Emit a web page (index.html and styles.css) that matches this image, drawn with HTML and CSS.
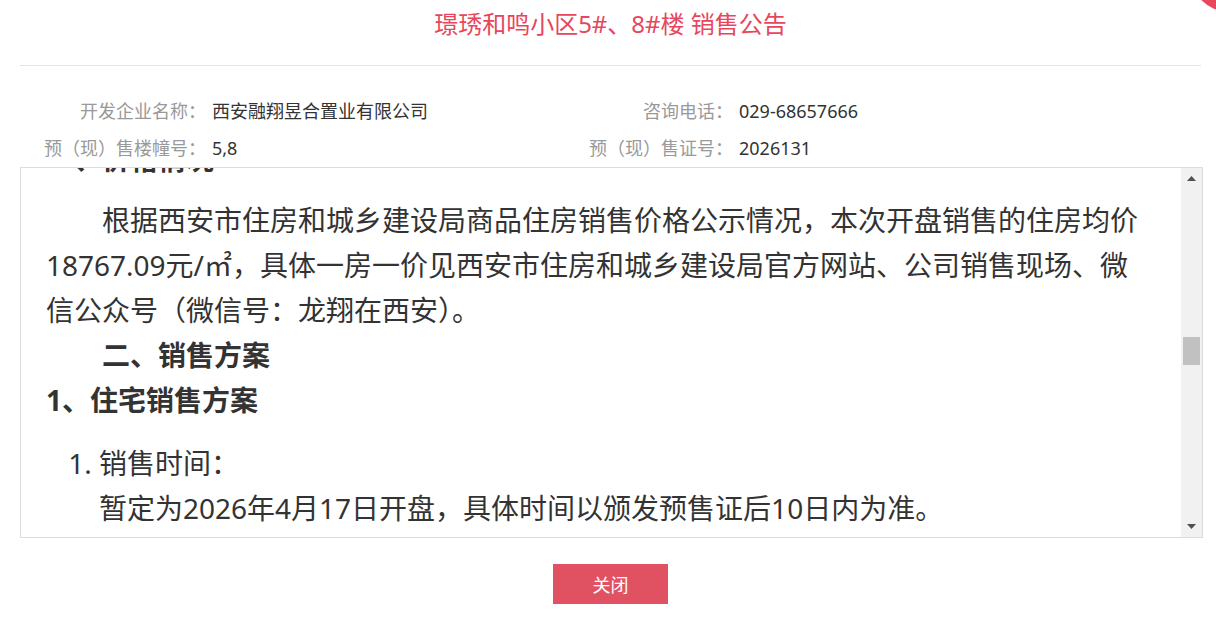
FILE: index.html
```html
<!DOCTYPE html>
<html>
<head>
	<title>璟琇和鸣小区5#、8#楼 销售公告</title>
	<meta charset="utf-8">
	<meta name="viewport" content="width=device-width, initial-scale=1">
	<link rel="stylesheet" href="styles.css">
</head>
<body>
	<span class="close-dot"></span>
	<div class="wrap">
		<div class="head">
			<h1 class="title">璟琇和鸣小区5#、8#楼 销售公告</h1>
		</div>
		<div class="info">
			<span class="label">开发企业名称：</span><span class="value">西安融翔昱合置业有限公司</span>
			<span class="label">咨询电话：</span><span class="value">029-68657666</span>
			<span class="label">预（现）售楼幢号：</span><span class="value">5,8</span>
			<span class="label">预（现）售证号：</span><span class="value">2026131</span>
		</div>
		<div class="notice">
			<div class="notice-body" id="notice">
				<h2 class="doc-title">璟琇和鸣小区5#、8#楼销售公告</h2>
				<p class="para">西安融翔昱合置业有限公司开发建设的璟琇和鸣小区项目5#、8#楼已取得西安市住房和城乡建设局核发的《商品房预售许可证》，具备对外销售条件。为保障购房群众合法权益，规范商品房销售行为，现将本次销售有关事项公告如下：</p>
				<h4 class="sec">项目基本情况</h4>
				<p>项目名称：璟琇和鸣小区</p>
				<p>开发企业：西安融翔昱合置业有限公司</p>
				<p>项目地址：西安市未央区北辰大道与凤城九路十字东北角</p>
				<p>预售许可证号：2026131</p>
				<p>本次销售楼栋：5#、8#楼</p>
				<p>房屋用途：住宅</p>
				<p>建筑结构：钢筋混凝土剪力墙结构</p>
				<p>楼栋层数：5#楼地上33层、地下2层；8#楼地上33层、地下2层</p>
				<p>本次销售套数：共计396套，其中5#楼198套，8#楼198套</p>
				<p>本次销售面积：共计46712.58㎡</p>
				<p>主力户型：建筑面积约98㎡三室两厅一卫、约118㎡三室两厅两卫、约139㎡四室两厅两卫</p>
				<p>交付标准：毛坯交付</p>
				<p>预计交房时间：2028年6月30日前</p>
				<p>物业服务企业：西安融翔物业服务有限公司</p>
				<p>物业服务费：住宅2.38元/㎡·月</p>
				<h4 class="sec">车位配套情况</h4>
				<p class="para">本项目规划机动车停车位共计1286个，其中地下机动车停车位1198个，地上机动车停车位88个，车位销售方案另行公示。</p>
				<h4 class="sec">周边配套情况</h4>
				<p class="para">项目周边规划有幼儿园、小学、社区卫生服务站及商业配套设施，相关配套以政府最终规划及建设情况为准，不作为本公司对购房人的承诺。</p>
				<h4 class="sec-flat" id="price">一、价格情况</h4>
				<p class="para">根据西安市住房和城乡建设局商品住房销售价格公示情况，本次开盘销售的住房均价18767.09元/㎡，具体一房一价见西安市住房和城乡建设局官方网站、公司销售现场、微信公众号（微信号：龙翔在西安）。</p>
				<h4 class="sec">二、销售方案</h4>
				<h3 class="sub">1、住宅销售方案</h3>
				<ol class="steps">
					<li>
						<p>销售时间：</p>
						<p>暂定为2026年4月17日开盘，具体时间以颁发预售证后10日内为准。</p>
					</li>
					<li>
						<p>销售地点：</p>
						<p>璟琇和鸣小区营销中心（西安市未央区北辰大道与凤城九路十字东北角）。</p>
					</li>
					<li>
						<p>销售对象：</p>
						<p>符合西安市住房限购政策的购房群众，购房人须在选房前完成购房资格审核。</p>
					</li>
					<li>
						<p>销售方式：</p>
						<p>本次房源采用公开摇号方式销售，摇号过程由公证处现场公证，摇号结果在公司销售现场及微信公众号同步公示。</p>
					</li>
					<li>
						<p>付款方式：</p>
						<p>一次性付款、商业贷款、公积金贷款及组合贷款，首付款比例按照国家及西安市现行政策执行。</p>
					</li>
					<li>
						<p>认购须知：</p>
						<p>购房人应持本人有效身份证件及相关材料在规定时间内到销售现场办理认购手续，逾期视为自动放弃。</p>
					</li>
				</ol>
				<h3 class="sub">2、车位销售方案</h3>
				<p class="para">车位销售方案另行公示，具体以销售现场公示为准。</p>
				<h4 class="sec">三、其他事项</h4>
				<p class="para">1. 本公司承诺严格执行明码标价、一房一价规定，不在标价之外加价销售或收取任何未予标明的费用。</p>
				<p class="para">2. 购房人应认真阅读《商品房买卖合同》及相关附件，了解房屋的基本情况后再行购买。</p>
				<p class="para">3. 本公告未尽事宜以西安市住房和城乡建设局相关规定为准。</p>
				<p class="para">监督举报电话：12345</p>
				<p class="sign">西安融翔昱合置业有限公司<br>2026年4月10日</p>
			</div>
			<div class="scrollbar">
				<span class="sb-btn"><svg width="9" height="5" viewBox="0 0 9 5"><path d="M0 5L4.5 0L9 5Z" fill="#505050"/></svg></span>
				<div class="sb-track"><span class="sb-thumb"></span></div>
				<span class="sb-btn"><svg width="9" height="5" viewBox="0 0 9 5"><path d="M0 0L9 0L4.5 5Z" fill="#505050"/></svg></span>
			</div>
		</div>
		<div class="foot">
			<button class="btn-close">关闭</button>
		</div>
	</div>
	<script>
		var box = document.getElementById('notice');
		var mark = document.getElementById('price');
		box.scrollTop = mark.offsetTop + 31;
	</script>
</body>
</html>
```

FILE: styles.css
```css
* {
	box-sizing: border-box;
}
body, html {
	margin: 0px;
	background: white;
	font-family: "Noto Sans", "Noto Sans CJK SC", sans-serif;
	color: #333;
}
body {
	position: relative;
	overflow: hidden;
}
.close-dot {
	position: absolute;
	top: -55px;
	left: 1193px;
	width: 66px;
	height: 66px;
	border-radius: 50%;
	background: #e8475d;
}
.wrap {
	margin: 0px 15px 0px 20px;
}
.head {
	height: 66px;
	border-bottom: 1px solid #e4e4e4;
}
.title {
	margin: 0px;
	font-size: 24px;
	font-weight: normal;
	line-height: 48px;
	text-align: center;
	color: #e8465c;
}
.info {
	display: grid;
	grid-template-columns: 186px 321px 206px 1fr;
	padding-top: 27px;
	font-size: 18px;
	line-height: 37px;
}
.label {
	text-align: right;
	color: #999;
}
.value {
	padding-left: 6px;
	color: #333;
}
.notice {
	display: flex;
	height: 371px;
	margin-right: -2px;
	border: 1px solid #dcdcdc;
}
.notice-body {
	position: relative;
	flex: 1;
	overflow: hidden;
	padding: 20px 30px 300px 25px;
	font-size: 28px;
	line-height: 45px;
	color: #333;
}
.notice-body p {
	margin: 0px;
}
.scrollbar {
	display: flex;
	flex-direction: column;
	width: 21px;
	background: #f1f1f1;
}
.sb-btn {
	display: flex;
	align-items: center;
	justify-content: center;
	height: 21px;
}
.sb-btn svg {
	display: block;
}
.sb-track {
	flex: 1;
	padding: 0px 2px;
}
.sb-thumb {
	display: block;
	height: 28px;
	margin-top: 148px;
	background: #c1c1c1;
}
.doc-title {
	margin: 0px 0px 20px;
	font-size: 30px;
	line-height: 45px;
	text-align: center;
}
.para {
	text-indent: 2em;
}
.sec, .sec-flat, .sub {
	margin: 0px;
	font-size: 28px;
	line-height: 45px;
	font-weight: bold;
}
.sec {
	text-indent: 2em;
}
#price {
	margin-bottom: 16px;
}
.sub {
	margin-bottom: 18px;
}
.steps {
	margin: 0px 0px 18px;
	padding-left: 53px;
}
.steps li {
	margin-bottom: 18px;
}
.sign {
	margin-top: 60px !important;
	text-align: right;
}
.foot {
	display: flex;
	justify-content: center;
	padding-top: 26px;
}
.btn-close {
	width: 115px;
	height: 40px;
	border: none;
	background: #e05262;
	color: white;
	font-family: "Noto Sans CJK SC", sans-serif;
	font-size: 18px;
	cursor: pointer;
}
```
